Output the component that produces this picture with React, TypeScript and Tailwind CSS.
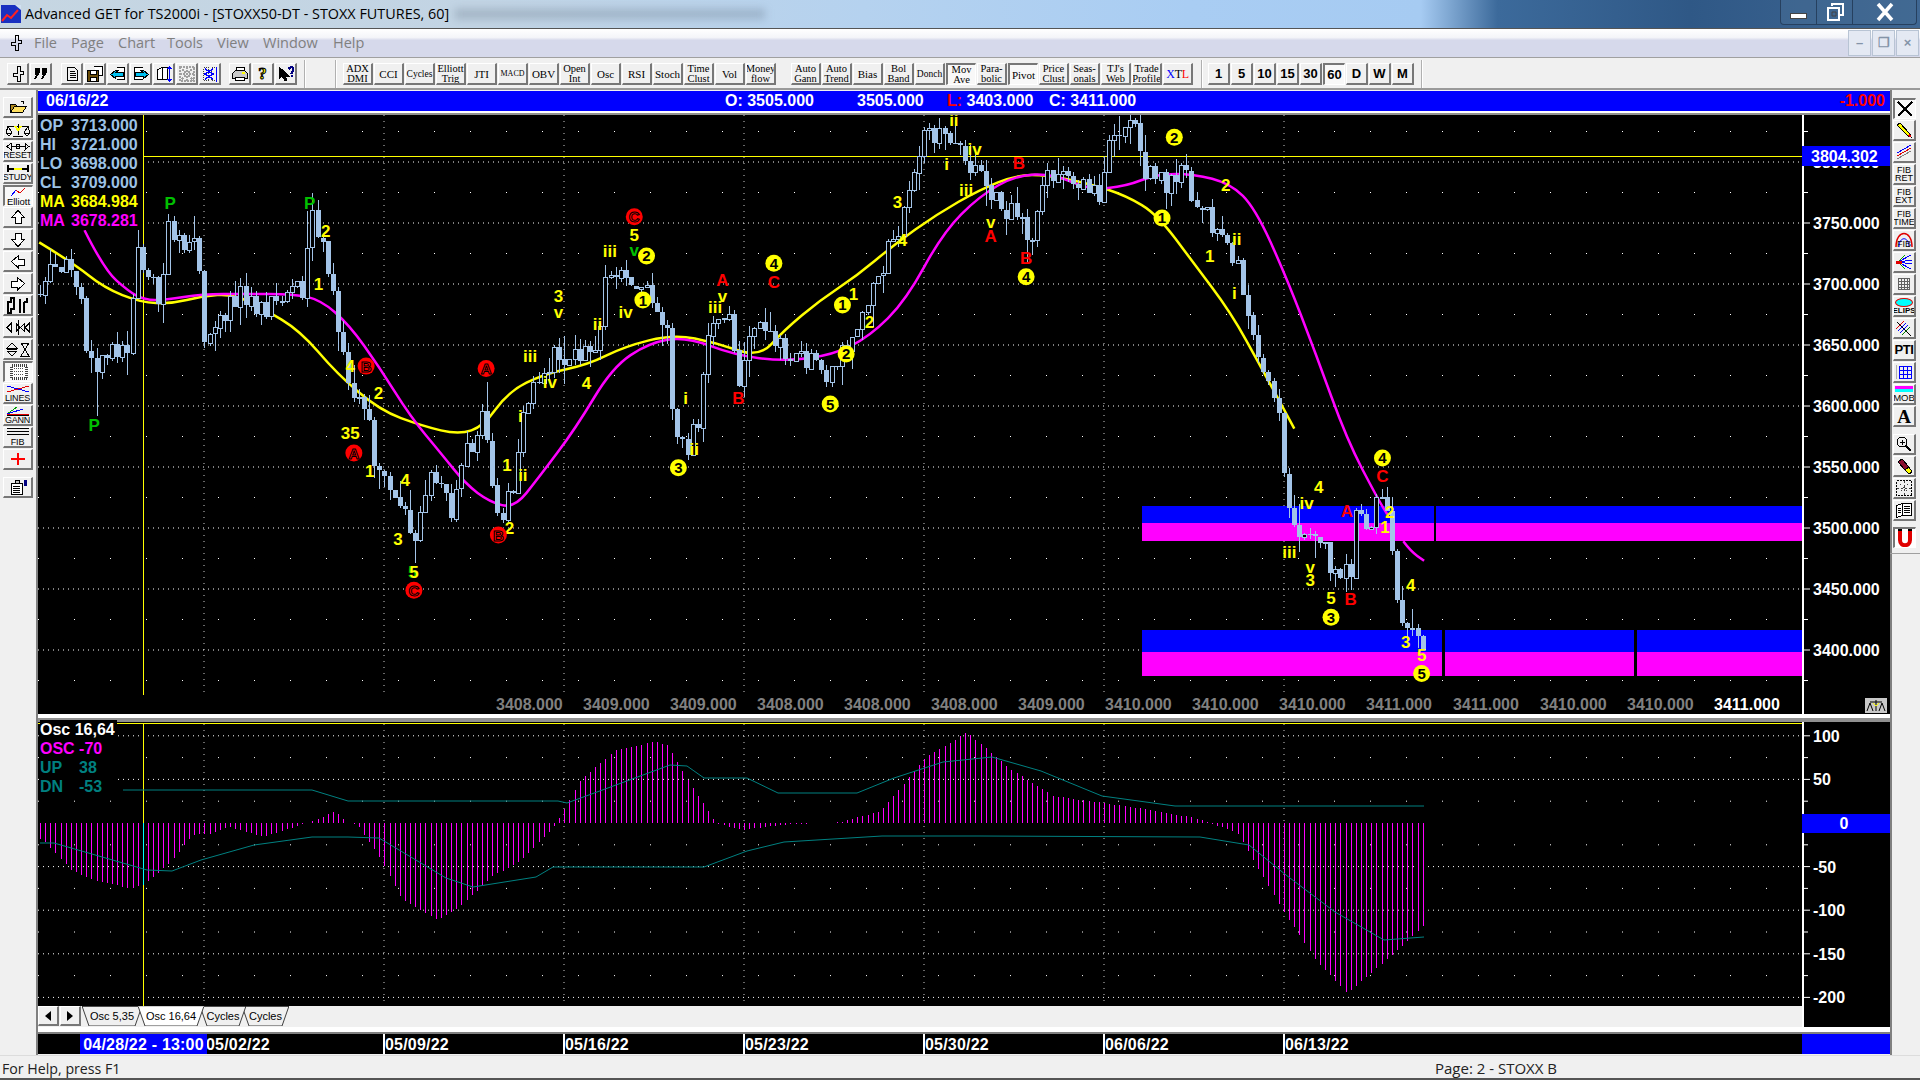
import type { ReactNode } from 'react';

const S = 1920 / 1568;
type Pt = [number, number];

// price path, read off the picture (in 1568-wide coordinates)
const pricePath: Pt[] = [
    [32, 240], [40, 222], [50, 215], [65, 240], [72, 290], [78, 315], [90, 275], [104, 290], [112, 205], [125, 230], [132, 250], [138, 182], [150, 212], [160, 182], [168, 290], [178, 260], [195, 240], [215, 250], [235, 240], [248, 235], [255, 180], [265, 210], [278, 270], [285, 310], [300, 330], [305, 370], [320, 400], [330, 425], [340, 440], [345, 400], [360, 390], [370, 420], [380, 370], [395, 340], [400, 390], [410, 420], [420, 400], [425, 340], [440, 310], [455, 290], [470, 285], [485, 295], [495, 225], [510, 222], [525, 230], [545, 270], [550, 340], [560, 365], [570, 340], [580, 260], [595, 265], [603, 315], [615, 270], [630, 270], [645, 290], [660, 290], [680, 310], [695, 270], [710, 240], [725, 205], [740, 170], [755, 105], [770, 110], [785, 130], [800, 140], [815, 165], [835, 175], [840, 200], [850, 150], [870, 145], [880, 150], [900, 165], [905, 120], [925, 100], [935, 135], [955, 150], [965, 140], [985, 175], [1000, 195], [1010, 210], [1018, 260], [1035, 310], [1045, 350], [1050, 415], [1060, 435], [1075, 430], [1085, 460], [1105, 470], [1100, 430], [1120, 420], [1130, 410], [1136, 430], [1140, 490], [1150, 510], [1160, 525],
];

// long wicks worth keeping: x, y tip
const spikes: Pt[] = [[78, 340], [338, 460], [1048, 385], [398, 312], [1130, 400], [252, 172], [137, 176], [160, 176], [780, 98], [928, 96], [1152, 497], [840, 215], [1105, 482]];

const maYellow: Pt[] = [
    [32, 198], [60, 215], [85, 235], [115, 247], [140, 248], [165, 242], [190, 240], [215, 252], [245, 270], [275, 305], [310, 335], [345, 348], [375, 355], [395, 348], [415, 320], [445, 305], [480, 298], [510, 283], [550, 273], [585, 280], [620, 292], [640, 270], [670, 245], [700, 225], [730, 200], [765, 175], [800, 155], [830, 143], [855, 143], [890, 150], [920, 160], [945, 175], [975, 215], [1005, 255], [1030, 300], [1057, 350],
];

const maMagenta: Pt[] = [
    [69, 188], [85, 220], [105, 238], [118, 245], [135, 245], [165, 240], [200, 240], [240, 240], [262, 245], [285, 265], [310, 300], [335, 340], [360, 370], [380, 395], [400, 410], [420, 415], [440, 390], [470, 350], [500, 300], [530, 280], [560, 275], [600, 290], [640, 295], [680, 290], [710, 275], [740, 245], [770, 190], [800, 160], [830, 143], [860, 142], [890, 155], [920, 152], [945, 142], [975, 142], [1005, 150], [1025, 170], [1050, 225], [1075, 290], [1100, 359], [1125, 407], [1133, 420],
];

const maMagentaEnd: Pt[] = [[1146, 442], [1152, 450], [1163, 458]];

// label: x, y, text, kind
type Kind = 'y' | 'g' | 'r' | 'cy' | 'cr';
const waves: [number, number, string, Kind][] = [
    [139, 166, 'P', 'g'], [253, 166, 'P', 'g'], [77, 347, 'P', 'g'],
    [266, 189, '2', 'y'], [260, 232, '1', 'y'], [286, 299, '4', 'y'], [309, 321, '2', 'y'], [286, 354, '35', 'y'], [302, 385, '1', 'y'], [331, 392, '4', 'y'], [325, 440, '3', 'y'], [337, 467, '5', 'g'], [338, 467, '5', 'y'],
    [414, 380, '1', 'y'], [416, 431, '2', 'y'], [425, 340, 'i', 'y'], [427, 388, 'ii', 'y'], [433, 291, 'iii', 'y'], [449, 312, 'iv', 'y'], [479, 313, '4', 'y'], [488, 265, 'ii', 'y'], [456, 242, '3', 'y'], [456, 255, 'v', 'y'], [498, 205, 'iii', 'y'], [518, 192, '5', 'y'], [518, 204, 'v', 'g'], [511, 255, 'iv', 'y'], [560, 325, 'i', 'y'], [567, 367, 'ii', 'y'], [584, 251, 'iii', 'y'], [590, 242, 'v', 'y'],
    [773, 134, 'i', 'y'], [796, 122, 'iv', 'y'], [789, 155, 'iii', 'y'], [779, 98, 'ii', 'y'], [697, 240, '1', 'y'], [710, 263, '2', 'y'], [733, 165, '3', 'y'], [737, 196, '4', 'y'], [809, 181, 'v', 'y'], [1001, 151, '2', 'y'], [988, 209, '1', 'y'], [1010, 195, 'ii', 'y'], [1008, 239, 'i', 'y'],
    [1053, 451, 'iii', 'y'], [1067, 411, 'iv', 'y'], [1077, 398, '4', 'y'], [1070, 463, 'v', 'y'], [1070, 474, '3', 'y'], [1087, 488, '5', 'y'], [1135, 418, '2', 'y'], [1131, 430, '1', 'y'], [1152, 478, '4', 'y'], [1148, 524, '3', 'y'], [1161, 535, '5', 'y'],
    [590, 229, 'A', 'r'], [632, 230, 'C', 'r'], [603, 325, 'B', 'r'], [809, 193, 'A', 'r'], [832, 133, 'B', 'r'], [838, 211, 'B', 'r'], [1129, 389, 'C', 'r'], [1100, 417, 'A', 'r'], [1103, 489, 'B', 'r'],
    [528, 209, '2', 'cy'], [525, 245, '1', 'cy'], [554, 382, '3', 'cy'], [632, 215, '4', 'cy'], [688, 249, '1', 'cy'], [691, 289, '2', 'cy'], [678, 330, '5', 'cy'], [838, 226, '4', 'cy'], [959, 112, '2', 'cy'], [949, 178, '1', 'cy'], [1087, 504, '3', 'cy'], [1129, 374, '4', 'cy'], [1161, 550, '5', 'cy'],
    [518, 177, 'C', 'cr'], [299, 299, 'B', 'cr'], [397, 301, 'A', 'cr'], [289, 370, 'A', 'cr'], [407, 437, 'B', 'cr'], [338, 482, 'C', 'cr'],
];

// real px: x, oscillator value
const oscPath: Pt[] = [
    [40, -18], [45, -22], [71, -54], [92, -65], [130, -75], [143, -71], [170, -46], [192, -14], [210, -12], [228, -4], [263, -16], [304, -1], [335, 13], [348, 0], [357, -2], [380, -40], [402, -88], [437, -111], [460, -96], [491, -62], [522, -42], [553, -5], [563, 13], [580, 49], [616, 84], [654, 93], [667, 90], [690, 45], [716, 0], [741, -8], [784, -2], [840, 1], [881, 14], [925, 75], [967, 104], [1010, 62], [1053, 31], [1139, 17], [1194, 6], [1237, -11], [1280, -95], [1316, -158], [1347, -195], [1378, -165], [1408, -135], [1424, -117],
];

const tealUp: Pt[] = [
    [123, 790], [312, 790], [348, 801], [558, 801], [567, 803], [616, 785], [670, 765], [687, 766], [704, 778], [747, 778], [778, 793], [857, 793], [894, 778], [943, 762], [992, 757], [1041, 771], [1102, 796], [1175, 806], [1424, 806],
];

const tealDn: Pt[] = [
    [40, 843], [54, 843], [147, 870], [172, 871], [201, 860], [254, 845], [312, 837], [348, 837], [379, 838], [446, 878], [473, 887], [536, 877], [553, 867], [704, 867], [747, 851], [784, 842], [882, 836], [980, 836], [1200, 837], [1249, 845], [1286, 875], [1335, 912], [1384, 940], [1424, 937],
];

const joined = (pts: Pt[]) => pts.map(([x, y]) => `${x},${y}`).join(' ');

// curve through the midpoints, so the averages don't look like a polygon
function smooth(pts: Pt[]) {
    const p = pts.map(([x, y]) => [x * S, y * S]);
    let d = `M${p[0][0].toFixed(1)} ${p[0][1].toFixed(1)}`;
    for (let i = 1; i < p.length - 1; i++) {
        const mx = (p[i][0] + p[i + 1][0]) / 2;
        const my = (p[i][1] + p[i + 1][1]) / 2;
        d += `Q${p[i][0].toFixed(1)} ${p[i][1].toFixed(1)} ${mx.toFixed(1)} ${my.toFixed(1)}`;
    }
    const l = p[p.length - 1];
    return `${d}L${l[0].toFixed(1)} ${l[1].toFixed(1)}`;
}

function lerp(pts: Pt[], x: number) {
    for (let i = 1; i < pts.length; i++) {
        if (x <= pts[i][0] && pts[i][0] > pts[i - 1][0]) {
            const t = (x - pts[i - 1][0]) / (pts[i][0] - pts[i - 1][0]);
            if (t >= 0) return pts[i - 1][1] + (pts[i][1] - pts[i - 1][1]) * t;
        }
    }
    return pts[pts.length - 1][1];
}

function rng(seed: number) {
    let a = seed;
    return () => {
        a = (a + 0x6d2b79f5) | 0;
        let t = Math.imul(a ^ (a >>> 15), 1 | a);
        t = (t + Math.imul(t ^ (t >>> 7), 61 | t)) ^ t;
        return ((t ^ (t >>> 14)) >>> 0) / 4294967296;
    };
}

const candles = (() => {
    const r = rng(42);
    const out: { x: number; o: number; c: number; h: number; l: number }[] = [];
    let prev = lerp(pricePath, 32) * S;
    for (let x = 40; x < 1424; x += 5.14) {
        const target = lerp(pricePath, x / S) * S;
        const c = target + (r() - 0.5) * 26;
        const o = prev;
        const h = Math.min(o, c) - r() * r() * 24;
        const l = Math.max(o, c) + r() * r() * 24;
        out.push({ x: Math.round(x) + 0.5, o, c, h, l });
        prev = c;
    }
    for (const [sx, sy] of spikes) {
        const rx = sx * S;
        const near = out.reduce((a, b) => (Math.abs(b.x - rx) < Math.abs(a.x - rx) ? b : a));
        if (sy * S < near.h) near.h = sy * S;
        if (sy * S > near.l) near.l = sy * S;
    }
    return out;
})();

const oscBars = (() => {
    const out: { x: number; v: number }[] = [];
    for (let x = 40; x < 1425; x += 5.14) out.push({ x: Math.round(x) + 0.5, v: lerp(oscPath, x) });
    return out;
})();

const priceY = (p: number) => 650 + (3400 - p) * 1.22;
const oscY = (v: number) => 823 - v * 0.872;
const gridX = [204, 384, 564, 744, 924, 1104, 1284];

function DotRows({ ys }: { ys: number[] }) {
    return (
        <>
            {ys.map((y) => (
                <line key={y} x1={38} x2={1802} y1={y} y2={y} stroke="#fff" strokeDasharray="1 35" />
            ))}
        </>
    );
}

function Wave({ x, y, t, k }: { x: number; y: number; t: string; k: Kind }) {
    const cx = x * S;
    const cy = y * S;
    if (k === 'cy') {
        return (
            <g>
                <circle cx={cx} cy={cy} r={8.5} fill="#ffff00" />
                <text x={cx} y={cy + 5.5} textAnchor="middle" fontSize={15} fontWeight={700} fill="#000">{t}</text>
            </g>
        );
    }
    if (k === 'cr') {
        return (
            <g>
                <circle cx={cx} cy={cy} r={8.5} fill="#ff0000" />
                <text x={cx} y={cy + 5.5} textAnchor="middle" fontSize={15} fontWeight={700} fill="#ff0000" stroke="#000" strokeWidth={1}>{t}</text>
            </g>
        );
    }
    const fill = k === 'y' ? '#ffff00' : k === 'g' ? '#00c000' : '#ff0000';
    return <text x={cx} y={cy + 6} textAnchor="middle" fontSize={17} fontWeight={700} fill={fill}>{t}</text>;
}

function MainPlot() {
    const ys = [3800, 3750, 3700, 3650, 3600, 3550, 3500, 3450, 3400].map(priceY);
    const bottom = ['3408.000', '3409.000', '3409.000', '3408.000', '3408.000', '3408.000', '3409.000', '3410.000', '3410.000', '3410.000', '3411.000', '3411.000', '3410.000', '3410.000'];
    return (
        <svg viewBox="38 115 1764 599" className="block w-[1764px] h-[599px] shrink-0 bg-black" style={{ fontFamily: '"Liberation Sans", sans-serif' }}>
            {ys.map((y) => <line key={y} x1={38} x2={1802} y1={y} y2={y} stroke="#fff" strokeDasharray="1 4" />)}
            {gridX.map((x) => <line key={x} x1={x} x2={x} y1={115} y2={695} stroke="#fff" strokeDasharray="1 5" strokeOpacity={0.8} />)}
            <DotRows ys={[3825, 3775, 3725, 3675, 3625, 3575, 3525, 3475, 3425, 3375].map(priceY)} />
            <line x1={143.5} x2={143.5} y1={115} y2={695} stroke="#ffff00" />
            <line x1={143} x2={1802} y1={156.5} y2={156.5} stroke="#ffff00" />

            {/* zones */}
            <rect x={1142} y={506} width={660} height={17} fill="#0000ff" />
            <rect x={1142} y={523} width={660} height={18} fill="#ff00ff" />
            <rect x={1434} y={506} width={2} height={35} fill="#000" />
            <rect x={1142} y={630} width={660} height={22} fill="#0000ff" />
            <rect x={1142} y={652} width={660} height={24} fill="#ff00ff" />
            <rect x={1442} y={630} width={3} height={46} fill="#000" />
            <rect x={1634} y={630} width={3} height={46} fill="#000" />

            <path d={smooth(maYellow)} fill="none" stroke="#ffff00" strokeWidth={2.5} />
            <path d={smooth(maMagenta)} fill="none" stroke="#ff00ff" strokeWidth={2.5} />
            <path d={smooth(maMagentaEnd)} fill="none" stroke="#ff00ff" strokeWidth={2.5} />

            {candles.map((c, i) => {
                const up = c.c < c.o;
                const top = Math.round(Math.min(c.o, c.c));
                const h = Math.max(Math.round(Math.abs(c.o - c.c)), 1);
                return (
                    <g key={i} shapeRendering="crispEdges">
                        <line x1={c.x} x2={c.x} y1={Math.max(c.h, 115)} y2={c.l} stroke="#a3c4e8" />
                        {up ? (
                            <rect x={c.x - 2} y={top + 0.5} width={4} height={h} fill="#000" stroke="#a3c4e8" />
                        ) : (
                            <rect x={c.x - 2.5} y={top} width={5} height={h} fill="#a3c4e8" />
                        )}
                    </g>
                );
            })}

            {waves.map(([x, y, t, k], i) => <Wave key={i} x={x} y={y} t={t} k={k} />)}

            {bottom.map((t, i) => (
                <text key={i} x={496 + i * 87} y={710} fontSize={16} fontWeight={700} fill="#808080">{t}</text>
            ))}
            <text x={1714} y={710} fontSize={16} fontWeight={700} fill="#fff">3411.000</text>
        </svg>
    );
}

function MainAxis() {
    const labels = [3750, 3700, 3650, 3600, 3550, 3500, 3450, 3400];
    const majors = [3800, ...labels];
    const minors = [3825, 3775, 3725, 3675, 3625, 3575, 3525, 3475, 3425, 3375];
    return (
        <svg viewBox="1802 115 88 599" className="block w-[88px] h-[599px] shrink-0 bg-black" style={{ fontFamily: '"Liberation Sans", sans-serif' }}>
            <line x1={1803} x2={1803} y1={115} y2={714} stroke="#fff" strokeWidth={2} />
            {majors.map((p) => <line key={p} x1={1803} x2={1810} y1={priceY(p)} y2={priceY(p)} stroke="#fff" />)}
            {minors.map((p) => <line key={p} x1={1803} x2={1808} y1={priceY(p)} y2={priceY(p)} stroke="#fff" />)}
            {[3800, ...labels].map((p) => (
                <text key={p} x={1813} y={priceY(p) + 6} fontSize={16} fontWeight={700} fill="#fff">{p}.000</text>
            ))}
            <rect x={1802} y={146} width={88} height={20} fill="#0000ff" />
            <text x={1811} y={162} fontSize={16} fontWeight={700} fill="#fff">3804.302</text>
            {/* scales mini icon */}
            <rect x={1865} y={698} width={22} height={15} fill="#c8c8c8" />
            <path d="M1867 711l3-8 3 8M1879 711l3-8 3 8M1870 702h12M1876 700v11" fill="none" stroke="#000" />
            <path d="M1873 703l3 3 3-3" fill="none" stroke="#ffff00" />
        </svg>
    );
}

function OscPlot() {
    const ys = [100, 50, -50, -100, -150, -200].map(oscY);
    return (
        <svg viewBox="38 722 1764 284" className="block w-[1764px] h-[284px] bg-black">
            {ys.map((y) => <line key={y} x1={38} x2={1802} y1={y} y2={y} stroke="#fff" strokeDasharray="1 4" />)}
            {gridX.map((x) => <line key={x} x1={x} x2={x} y1={724} y2={1006} stroke="#fff" strokeDasharray="1 5" strokeOpacity={0.8} />)}
            <DotRows ys={[75, 25, -25, -75, -125, -175].map(oscY)} />
            {oscBars.map((b, i) => (
                <line key={i} x1={b.x} x2={b.x} y1={823} y2={oscY(b.v)} stroke="#ff00ff" shapeRendering="crispEdges" />
            ))}
            <line x1={143.5} x2={143.5} y1={723} y2={1006} stroke="#ffff00" shapeRendering="crispEdges" />
            <line x1={143.5} x2={143.5} y1={823} y2={885} stroke="#00ffff" shapeRendering="crispEdges" />
            <line x1={38} x2={1802} y1={723.5} y2={723.5} stroke="#ffff00" />
            <polyline points={joined(tealUp)} fill="none" stroke="#008080" />
            <polyline points={joined(tealDn)} fill="none" stroke="#008080" />
        </svg>
    );
}

function OscAxis() {
    const labels = [100, 50, -50, -100, -150, -200];
    return (
        <svg viewBox="1802 722 88 305" className="block w-[88px] h-[305px] shrink-0 bg-black" style={{ fontFamily: '"Liberation Sans", sans-serif' }}>
            <line x1={1803} x2={1803} y1={722} y2={1027} stroke="#fff" strokeWidth={2} />
            {[...labels, 75, 25, -25, -75, -125, -175].map((v) => (
                <line key={v} x1={1803} x2={v % 50 === 0 ? 1810 : 1808} y1={oscY(v)} y2={oscY(v)} stroke="#fff" />
            ))}
            {labels.map((v) => (
                <text key={v} x={1813} y={oscY(v) + 6} fontSize={16} fontWeight={700} fill="#fff">{v}</text>
            ))}
            <rect x={1802} y={814} width={88} height={19} fill="#0000ff" />
            <text x={1844} y={829} textAnchor="middle" fontSize={16} fontWeight={700} fill="#fff">0</text>
        </svg>
    );
}

function Raised({ children, pressed, className }: { children: ReactNode; pressed?: boolean; className: string }) {
    const edge = pressed
        ? 'border-t-2 border-l-2 border-t-[#777] border-l-[#777] border-r border-b border-r-white border-b-white bg-[#f8f8f8]'
        : 'border-t border-l border-t-white border-l-white border-r-2 border-b-2 border-r-[#777] border-b-[#777] bg-[#f0f0f0]';
    return <div className={`${edge} ${className} flex items-center justify-center shrink-0 overflow-hidden`}>{children}</div>;
}

const TB = 'w-[22px] h-[22px]';
const STUDY = 'w-[30px] h-[22px]';

function Ico({ children, w = 18, h = 18 }: { children: ReactNode; w?: number; h?: number }) {
    return (
        <svg width={w} height={h} viewBox={`0 0 ${w} ${h}`} fill="none" stroke="#000" strokeWidth={1} shapeRendering="crispEdges">
            {children}
        </svg>
    );
}

const CrossGlyph = () => (
    <Ico w={12} h={18}>
        <path d="M5.5 1.5h3v5h3v3h-3v7h-3v-5h-4v-3h4z" strokeWidth={1.5} />
    </Ico>
);

function StudyBtn({ a, b, pressed }: { a: string; b?: string; pressed?: boolean }) {
    const single = a === 'MACD' ? 'text-[8px] leading-[12px]' : a === 'Cycles' || a === 'Donch' ? 'text-[9.5px] leading-[12px]' : 'text-[11px] leading-[12px]';
    return (
        <Raised pressed={pressed} className={STUDY}>
            <span className="flex flex-col items-center text-center text-black whitespace-nowrap" style={{ fontFamily: '"Liberation Serif", serif' }}>
                <span className={b ? 'text-[10.5px] leading-[9.5px]' : single}>{a}</span>
                {b && <span className="text-[10.5px] leading-[9.5px]">{b}</span>}
            </span>
        </Raised>
    );
}

const groupOne: [string, string?][] = [['ADX', 'DMI'], ['CCI'], ['Cycles'], ['Elliott', 'Trig'], ['JTI'], ['MACD'], ['OBV'], ['Open', 'Int'], ['Osc'], ['RSI'], ['Stoch'], ['Time', 'Clust'], ['Vol'], ['Money', 'flow']];
const groupTwo: [string, string?, boolean?][] = [['Auto', 'Gann'], ['Auto', 'Trend'], ['Bias'], ['Bol', 'Band'], ['Donch'], ['Mov', 'Ave', true], ['Para-', 'bolic'], ['Pivot', undefined, true], ['Price', 'Clust'], ['Seas-', 'onals'], ["TJ's", 'Web'], ['Trade', 'Profile']];

const Sep = ({ className }: { className: string }) => <div className={`w-[2px] h-[28px] border-l border-[#b0b0b0] bg-white shrink-0 ${className}`} />;

function TopToolbar() {
    return (
        <div className="h-[32px] shrink-0 flex items-center pl-[7px] pt-[2px] bg-[#f0f0f0] border-b-2 border-[#9a9a9a]">
            <div className="flex gap-px">
                <Raised className={TB}><CrossGlyph /></Raised>
                <Raised className={TB}>
                    <Ico w={14} h={14}><path d="M1 1h4v5l-3 5H1l2-4H1zM8 1h4v5l-3 5H8l2-4H8z" fill="#000" /></Ico>
                </Raised>
            </div>
            <div className="flex gap-px ml-[9px]">
                <Raised className={TB}><Ico w={14} h={16}><path d="M2.5 1.5h7l3 3v10h-10zM4.5 5.5h5M4.5 7.5h6M4.5 9.5h6M4.5 11.5h6" /></Ico></Raised>
                <Raised className={TB}><Ico><path d="M7.5 1.500h9v9h-4" fill="#fff" /><path d="M1.5 5.5h11v11h-11z" fill="#6a4c08" /><path d="M4.5 5.5h6v4h-6zM4.5 12.5h6v4h-6z" fill="#fff" /></Ico></Raised>
                <Raised className={TB}><Ico><path d="M7.5 2.5h8v12h-8" fill="#fff" /><path d="M9.5 5.5h-3l-5 4 5 4v-2h8v-4h-8z" fill="#00c0f0" /></Ico></Raised>
                <Raised className={TB}><Ico><path d="M10.5 2.5h-8v12h8" fill="#fff" /><path d="M8.5 5.5h3l5 4-5 4v-2h-8v-4h8z" fill="#00c0f0" /></Ico></Raised>
                <Raised className={TB}><Ico><path d="M2.5 4.500l5-2v12h-5zM7.500 2.500h5v12h-5z" fill="#fff" /><path d="M14.500 1.500v15M12.500 4l2-2 2 2M12.500 14l2 2 2-2" stroke="#0000ff" /></Ico></Raised>
                <Raised className={TB}><Ico><path d="M2 2l14 14M16 2L2 16M2 9h14M9 2v14M2 2h14v14H2z" stroke="#a0a0a0" strokeWidth={2} strokeDasharray="2 1" /></Ico></Raised>
                <Raised className={TB}><Ico><path d="M2.500 2.500h5v13h-5zM10.500 2.500h5v13h-5z" stroke="#404040" strokeDasharray="1 1" /><path d="M4 4l8 5-8 5M12 4L4 9l8 5" stroke="#0000ff" strokeWidth={1.5} /><path d="M15.500 1.500v15" stroke="#0000ff" /></Ico></Raised>
            </div>
            <div className="flex gap-px ml-[8px]">
                <Raised className={TB}><Ico><path d="M5.5 2.5h8v4h-8z" fill="#fff" /><path d="M1.5 8.5l3-3h9l3 3v5h-15z" fill="#c8c8c8" /><path d="M4.5 12.5h9v3h-9z" fill="#fff" /><path d="M11 8h3" stroke="#ffff00" strokeWidth={2} /></Ico></Raised>
                <Raised className={TB}><span className="text-[17px] font-bold text-[#ffff00] leading-none" style={{ fontFamily: '"Liberation Serif", serif', WebkitTextStroke: '1px #000' }}>?</span></Raised>
                <Raised className={TB}><Ico><path d="M2 2v12l3-3 3 5 2-1-2-4h4z" fill="#000" /><path d="M11.5 4.5c1-3 5-3 5 0 0 2-2 2-2 4M14.5 10v2" stroke="#000080" strokeWidth={2} /></Ico></Raised>
            </div>
            <Sep className="ml-[7px]" />
            <Sep className="ml-[29px]" />
            <div className="flex gap-px ml-[6px]">
                {groupOne.map(([a, b]) => <StudyBtn key={a} a={a} b={b} />)}
            </div>
            <div className="flex gap-px ml-[15px]">
                {groupTwo.map(([a, b, p]) => <StudyBtn key={a + (b ?? '')} a={a} b={b} pressed={p} />)}
                <Raised className={STUDY}>
                    <span className="text-[12px] tracking-tight" style={{ fontFamily: '"Liberation Serif", serif' }}>
                        <span className="text-[#0000ff]">X</span>T<span className="text-[#ff0000]">L</span>
                    </span>
                </Raised>
            </div>
            <Sep className="ml-[8px]" />
            <div className="flex gap-px ml-[5px]">
                {['1', '5', '10', '15', '30', '60', 'D', 'W', 'M'].map((t) => (
                    <Raised key={t} pressed={t === '60'} className={TB}>
                        <span className="text-[13px] font-bold text-black" style={{ fontFamily: '"Liberation Sans", sans-serif' }}>{t}</span>
                    </Raised>
                ))}
            </div>
            <Sep className="ml-[7px]" />
        </div>
    );
}

const cap = 'text-[9px] leading-[9px] text-black tracking-tight';
const capFont = { fontFamily: '"Liberation Sans", sans-serif' };
const LB = 'w-[30px] h-[21px]';

function Arrow({ d }: { d: string }) {
    return <Ico w={16} h={17}><path d={d} fill="#fff" /></Ico>;
}

function LeftToolbar() {
    const items: ReactNode[] = [
        <Ico key="o" w={20} h={16}><path d="M2.5 5.5h5l2 2h5v6h-12z" fill="#b08a20" /><path d="M2.5 13.5l4-6h12l-4 6z" fill="#ffe060" /><path d="M13 2c2 0 3 1 3 3" stroke="#000" /></Ico>,
        <Ico key="s" w={26} h={17}><path d="M3 5h20M13 3v11M8 15h10M3 5l-2 7M3 5l4 7M23 5l-4 7M23 5l2 7" /><path d="M1 12h6l-3 3zM19 12h6l-3 3z" fill="#fff" /><path d="M10 5l3 4 3-4" stroke="#ffff00" strokeWidth={2} /></Ico>,
        <div key="r" className="flex flex-col items-center" style={capFont}><Ico w={24} h={9}><path d="M1 4.5l4-3v6zM23 4.5l-4-3v6zM5 4.5h14" /><circle cx={12} cy={4.5} r={2} /></Ico><span className={cap}>RESET</span></div>,
        <div key="st" className="flex flex-col items-center" style={capFont}><Ico w={24} h={9}><path d="M2 1v7M22 1v7M2 4.5h20" strokeWidth={2} /><path d="M8 4.5h8" stroke="#ffff00" strokeWidth={2} /></Ico><span className={cap}>STUDY</span></div>,
        <div key="e" className="flex flex-col items-center" style={capFont}><Ico w={24} h={10}><path d="M4 9l5-6 4 3 5-5" stroke="#e00000" /><path d="M4 9l5-6" stroke="#0000ff" /></Ico><span className="text-[9.5px] leading-[9px] text-black">Elliott</span></div>,
        <Arrow key="u" d="M8 1.5l6.5 7h-3.5v6h-6v-6h-3.5z" />,
        <Arrow key="d" d="M8 15.5l6.5-7h-3.5v-6h-6v6h-3.5z" />,
        <Arrow key="l" d="M1.5 8.5l7-6v3.5h6v6h-6v3z" />,
        <Arrow key="ri" d="M14.5 8.5l-7-6v3.5h-6v6h6v3z" />,
        <Ico key="b1" w={26} h={17}><path d="M3 9V5h3V1h3v11H6v4H3V9zM15 2v14M19 9V5M19 5h3v-4M19 9v7" strokeWidth={1.5} /></Ico>,
        <Ico key="b2" w={26} h={17}><path d="M2 8.5l4-4v8zM11 4.5l4 4-4 4zM13 1v15M15.5 8.5l4-4v8zM24 4.5v8l-4-4z" /></Ico>,
        <Ico key="b3" w={26} h={17}><path d="M2 7l5-5 5 5zM2 10l5 5 5-5zM2 8.5h10M16 2h8l-4 6.5zM16 15h8l-4-6.5z" /></Ico>,
    ];
    const lower: ReactNode[] = [
        <Ico key="g" w={18} h={16}><path d="M1.5 1.5h15v13h-15z" fill="#fff" strokeDasharray="1 1" strokeWidth={3} stroke="#404040" /><path d="M4 4.5h10M4 7.5h10M4 10.5h10" stroke="#505050" strokeDasharray="1 1" /></Ico>,
        <div key="li" className="flex flex-col items-center" style={capFont}><Ico w={26} h={10}><path d="M2 2l22 6" stroke="#0000ff" /><path d="M2 8l22-6" stroke="#e00000" /></Ico><span className={cap}>LINES</span></div>,
        <div key="ga" className="flex flex-col items-center" style={capFont}><Ico w={26} h={10}><path d="M2 8l10-7" stroke="#00a000" /><path d="M2 8l16-5" stroke="#0000ff" /><path d="M2 8h22" stroke="#e00000" /><path d="M2 9.5h22" /></Ico><span className={cap}>GANN</span></div>,
        <div key="fi" className="flex flex-col items-center gap-[2px]" style={capFont}><Ico w={26} h={9}><path d="M2 1.5h22M2 4.5h22M2 7.5h22" /></Ico><span className={cap}>FIB</span></div>,
        <Ico key="p" w={16} h={16}><path d="M8 2v12M1 8h14" stroke="#ff0000" strokeWidth={2} /></Ico>,
    ];
    return (
        <div className="w-[36px] shrink-0 pl-[3px] pt-[7px] flex flex-col gap-px">
            {items.map((n, i) => <Raised key={i} pressed={i === 4} className={LB}>{n}</Raised>)}
            {lower.map((n, i) => <Raised key={i} pressed={i === 0} className={LB}>{n}</Raised>)}
            <Raised className={`${LB} mt-[6px]`}>
                <Ico w={22} h={18}><path d="M4.5 5.5h11v11h-11z" fill="#fff" /><path d="M6 8h7M6 10h7M6 12h7M6 14h7" /><path d="M8 2.5h4v3h-4z" fill="#c0c0c0" /><path d="M18 2v6" stroke="#000080" strokeWidth={3} /></Ico>
            </Raised>
        </div>
    );
}

const RB = 'w-[23px] h-[21px]';
const tiny = 'text-[9px] leading-[8.5px] text-black text-center';

function RightToolbar() {
    const items: ReactNode[] = [
        <Ico key="x"><path d="M2 2l14 14M16 2L2 16" strokeWidth={1.5} /></Ico>,
        <Ico key="pen"><path d="M2 4l3-2 10 11 1 3-3-1z" fill="#ffff00" /><path d="M14 14l2 2" stroke="#e00000" strokeWidth={2} /></Ico>,
        <Ico key="par"><path d="M2 10L16 2" stroke="#0000ff" /><path d="M2 13L16 5" stroke="#e00000" /><path d="M2 16L16 8" stroke="#808080" /></Ico>,
        <span key="fr" className={tiny} style={capFont}>FIB<br />RET</span>,
        <span key="fe" className={tiny} style={capFont}>FIB<br />EXT</span>,
        <span key="ft" className={tiny} style={capFont}>FIB<br />TIME</span>,
        <div key="fa" className="relative flex items-end justify-center w-[20px] h-[18px]" style={capFont}>
            <svg width={20} height={18} viewBox="0 0 20 18" fill="none" className="absolute inset-0"><path d="M2 16c0-18 16-18 16 0" stroke="#e00000" strokeWidth={1.5} /><path d="M5 16c0-11 10-11 10 0" stroke="#0000ff" /></svg>
            <span className="relative text-[9px] leading-[9px] text-black">FIB</span>
        </div>,
        <Ico key="fan"><path d="M3 9l13-7" stroke="#0000ff" /><path d="M3 9l14-2" stroke="#0000ff" /><path d="M3 9l14 2" stroke="#0000ff" /><path d="M3 9l13 7" stroke="#0000ff" /><path d="M3 9l7-7M3 9l7 7" stroke="#00a000" /><path d="M1 9h6" stroke="#e00000" strokeWidth={3} /></Ico>,
        <Ico key="gr"><path d="M3.5 3.5h11v11h-11zM3 6.5h12M3 9.5h12M3 12.5h12M6.5 3v12M9.5 3v12M12.5 3v12" stroke="#606060" /></Ico>,
        <div key="el" className="flex flex-col items-center" style={capFont}>
            <span className="block w-[18px] h-[9px] rounded-[50%] bg-[#00ffff] border border-[#e00000]" />
            <span className="text-[8px] leading-[8px] font-bold text-black">ELIPS</span>
        </div>,
        <Ico key="li"><path d="M2 3l14 14" /><path d="M3 12l8-8M5 14l8-8" stroke="#0000ff" /><path d="M1 10l8-8" stroke="#e00000" /><path d="M7 16l8-8" stroke="#008000" /></Ico>,
        <span key="pti" className="text-[13px] font-bold text-black tracking-tight" style={capFont}>PTI</span>,
        <Ico key="tb"><path d="M4.5 3.5h12v12h-12zM4 7.5h12M4 11.5h12M8.500 3v12M12.500 3v12" stroke="#0000ff" /><path d="M1.5 2v14" stroke="#b0b0b0" /></Ico>,
        <div key="mo" className="flex flex-col items-center w-[19px]" style={capFont}>
            <span className="block w-[18px] h-[3px] bg-[#ff00ff]" />
            <span className="block w-[18px] h-[3px] bg-[#00ffff] mb-px" />
            <span className="text-[9.5px] leading-[9px] text-black">MOB</span>
        </div>,
        <span key="a" className="text-[19px] font-bold text-black leading-none" style={{ fontFamily: '"Liberation Serif", serif' }}>A</span>,
    ];
    const lower: ReactNode[] = [
        <Ico key="z"><circle cx={7} cy={7} r={5} /><path d="M4.5 7h5M7 4.5v5" /><path d="M11 11l5 5" strokeWidth={2.5} /></Ico>,
        <Ico key="er"><path d="M3 5l4-3 7 8-4 3z" fill="#8a1030" /><path d="M10 13l4-3 3 5-3 2z" fill="#ffff00" /></Ico>,
        <Ico key="pa"><path d="M1.5 1.5h15v15h-15z" strokeDasharray="2 1" /><path d="M5 5l8 8M13 5l-8 8M9 2v14M2 9h14" stroke="#404040" strokeDasharray="2 2" /></Ico>,
        <Ico key="pg"><path d="M1.5 4.5l6-2v12l-6 2zM7.5 2.5h9v12h-9z" fill="#fff" /><path d="M9 5h6M9 7h6M9 9h6M9 11h6M3 7h3M3 9h3M3 11h3" /></Ico>,
    ];
    return (
        <div className="w-[30px] shrink-0 pl-[3px] pt-[8px] flex flex-col gap-px">
            {items.map((n, i) => <Raised key={i} pressed={i === 0} className={RB}>{n}</Raised>)}
            <div className="flex flex-col gap-px mt-[6px]">
                {lower.map((n, i) => <Raised key={i} className={RB}>{n}</Raised>)}
            </div>
            <Raised pressed className={`${RB} mt-[5px] bg-white`}>
                <svg width={16} height={19} viewBox="0 0 16 19" fill="none"><path d="M3 1v10c0 7 10 7 10 0V1" stroke="#e00000" strokeWidth={4} /><path d="M1 1h4M11 1h4" stroke="#000" strokeWidth={2} /></svg>
            </Raised>
            <div className="h-px bg-[#a0a0a0] mt-[4px] -ml-[3px] w-[30px]" />
        </div>
    );
}

function Tab({ label, width, active, z }: { label: string; width: number; active?: boolean; z: string }) {
    return (
        <div className={`relative -mr-[4px] h-[20px] flex items-center justify-center ${z}`} style={{ width }}>
            <svg viewBox={`0 0 ${width} 20`} className="absolute inset-0 w-full h-full">
                <polygon points={`0,0 ${width},0 ${width - 7},20 7,20`} fill={active ? '#fff' : '#f0f0f0'} stroke="#404040" />
                <line x1={0} x2={width} y1={0} y2={0} stroke={active ? '#fff' : '#000'} />
            </svg>
            <span className="relative text-[11px] text-black" style={capFont}>{label}</span>
        </div>
    );
}

function TabStrip() {
    return (
        <div className="h-[21px] flex bg-[#f0f0f0]">
            <Raised className="w-[21px] h-[20px]">
                <svg width={6} height={10} viewBox="0 0 6 10"><polygon points="6,0 0,5 6,10" fill="#000" /></svg>
            </Raised>
            <Raised className="w-[21px] h-[20px] ml-px">
                <svg width={6} height={10} viewBox="0 0 6 10"><polygon points="0,0 6,5 0,10" fill="#000" /></svg>
            </Raised>
            <div className="flex ml-px">
                <Tab label="Osc 5,35" width={60} z="z-0" />
                <Tab label="Osc 16,64" width={66} active z="z-20" />
                <Tab label="Cycles" width={46} z="z-10" />
                <Tab label="Cycles" width={47} z="z-0" />
            </div>
        </div>
    );
}

function DateBar() {
    const dates: [string, number][] = [['05/02/22', 168], ['05/09/22', 347], ['05/16/22', 527], ['05/23/22', 707], ['05/30/22', 887], ['06/06/22', 1067], ['06/13/22', 1247]];
    return (
        <div className="relative h-[22px] border-t-2 border-[#808080] bg-black flex text-white text-[16px] font-bold leading-[21px] tracking-[0.2px]" style={capFont}>
            <div className="relative w-[1764px] overflow-hidden">
                {dates.map(([d, x]) => (
                    <div key={d} className="absolute top-0 h-[20px] border-l-2 border-white" style={{ left: x - 2 }}>{d}</div>
                ))}
                <div className="absolute left-[42px] top-0 w-[127px] h-[20px] bg-[#0000ff] text-center whitespace-nowrap">04/28/22 - 13:00</div>
            </div>
            <div className="w-[88px] bg-[#0000ff]" />
        </div>
    );
}

const legendRow = 'flex';
const legendKey = 'w-[31px]';

export default function App() {
    const sans = '"Liberation Sans", sans-serif';
    const ui = '"Open Sans", "Noto Sans", sans-serif';
    return (
        <div className="w-[1920px] h-[1080px] overflow-hidden flex flex-col bg-[#f0f0f0]" style={{ fontFamily: sans }}>
            {/* title bar */}
            <div className="relative h-[28px] shrink-0 flex items-center bg-[linear-gradient(90deg,#c6d6e2_0%,#c2d4e4_25%,#b5d2ef_45%,#a9cdf3_62%,#a6cbf2_74%,#3c6a9b_78%,#2f5886_88%,#3f6793_100%)]">
                <svg width={20} height={18} viewBox="0 0 20 18" className="ml-[1px]">
                    <rect width={20} height={18} fill="#1830c0" />
                    <path d="M1 16l5-6 4 3 7-8" stroke="#ff2020" strokeWidth={2} fill="none" />
                    <path d="M14 0l6 0 0 5z" fill="#d0e0f0" />
                </svg>
                <span className="ml-[4px] text-[14.4px] text-black whitespace-nowrap" style={{ fontFamily: ui }}>Advanced GET for TS2000i - [STOXX50-DT - STOXX FUTURES, 60]</span>
                <div className="absolute left-[455px] top-[9px] w-[310px] h-[10px] bg-[#5a6a7a]/30 blur-[4px]" />
                <div className="absolute right-[3px] top-0 w-[137px] h-[25px] flex rounded-b-[4px] border border-t-0 border-[#26405f] bg-[#456a92]/60">
                    <div className="w-[36px] flex items-end justify-center pb-[5px] border-r border-[#26405f]"><span className="block w-[17px] h-[6px] bg-white border border-[#444]" /></div>
                    <div className="w-[36px] flex items-center justify-center border-r border-[#26405f]">
                        <svg width={20} height={20} viewBox="0 0 20 20" fill="none" stroke="#fff" strokeWidth={2}><path d="M7 4V2h11v11h-3" /><path d="M3 6h11v12H3z" /><path d="M7 10h4v4H7z" stroke="#444" strokeWidth={1} /></svg>
                    </div>
                    <div className="flex-1 flex items-center justify-center">
                        <svg width={20} height={20} viewBox="0 0 20 20" stroke="#fff" strokeWidth={3.5}><path d="M3 2l14 16M17 2L3 18" /></svg>
                    </div>
                </div>
            </div>

            {/* menu bar */}
            <div className="relative h-[30px] shrink-0 flex items-center bg-[linear-gradient(180deg,#ffffff_0%,#f4f5f9_30%,#d6d9eb_40%,#d6d9eb_100%)] border-t border-[#555] border-b border-b-[#a0a0a0]">
                <div className="w-[34px] pl-[10px]"><CrossGlyph /></div>
                <div className="flex text-[14.5px] text-[#808080]" style={{ fontFamily: ui }}>
                    <span className="w-[37px]">File</span>
                    <span className="w-[47px]">Page</span>
                    <span className="w-[49px]">Chart</span>
                    <span className="w-[50px]">Tools</span>
                    <span className="w-[46px]">View</span>
                    <span className="w-[70px]">Window</span>
                    <span>Help</span>
                </div>
                <div className="ml-auto mr-px flex gap-px text-[#8494a8]">
                    {['–', '❐', '×'].map((g) => (
                        <div key={g} className="w-[23px] h-[26px] flex items-center justify-center bg-[#e4e9f3] border border-[#b8c4d4] text-[13px] font-bold">{g}</div>
                    ))}
                </div>
            </div>

            <TopToolbar />

            <div className="flex flex-1 min-h-0">
                <LeftToolbar />
                <div className="w-[1856px] shrink-0 border-l-2 border-r-2 border-[#808080] -mr-[2px]">
                    {/* quote header */}
                    <div className="h-[20px] bg-[#0000ff] flex items-center text-white text-[16px] font-bold mt-px whitespace-nowrap">
                        <span className="w-[687px] pl-[8px]">06/16/22</span>
                        <span className="w-[132px]">O: 3505.000</span>
                        <span className="w-[90px]">3505.000</span>
                        <span className="w-[102px]"><span className="text-[#ff0000]">L:</span> 3403.000</span>
                        <span>C: 3411.000</span>
                        <span className="ml-auto mr-[5px] text-[#ff0000]">-1.000</span>
                    </div>
                    <div className="h-[4px] border-b-2 border-[#909090] bg-white" />
                    <div className="relative flex">
                        <MainPlot />
                        <MainAxis />
                        <div className="absolute left-[2px] top-px bg-black text-[16px] font-bold leading-[19px] whitespace-nowrap pr-[4px]">
                            <div className={`${legendRow} text-[#9cc2e5]`}><span className={legendKey}>OP</span>3713.000</div>
                            <div className={`${legendRow} text-[#9cc2e5]`}><span className={legendKey}>HI</span>3721.000</div>
                            <div className={`${legendRow} text-[#9cc2e5]`}><span className={legendKey}>LO</span>3698.000</div>
                            <div className={`${legendRow} text-[#9cc2e5]`}><span className={legendKey}>CL</span>3709.000</div>
                            <div className={`${legendRow} text-[#ffff00]`}><span className={legendKey}>MA</span>3684.984</div>
                            <div className={`${legendRow} text-[#ff00ff]`}><span className={legendKey}>MA</span>3678.281</div>
                        </div>
                    </div>
                    <div className="h-[8px] bg-white border-b-4 border-[#909090]" />
                    <div className="flex">
                        <div className="shrink-0">
                            <div className="relative">
                                <OscPlot />
                                <div className="absolute left-[2px] -top-[2px] bg-black text-[16px] font-bold leading-[19px] whitespace-nowrap pr-[2px]">
                                    <div className="text-white">Osc 16,64</div>
                                    <div className="text-[#ff00ff]">OSC -70</div>
                                    <div className="flex text-[#008080]"><span className="w-[39px]">UP</span>38</div>
                                    <div className="flex text-[#008080]"><span className="w-[39px]">DN</span>-53</div>
                                </div>
                            </div>
                            <TabStrip />
                        </div>
                        <OscAxis />
                    </div>
                    <div className="h-[5px] bg-white" />
                    <DateBar />
                </div>
                <RightToolbar />
            </div>

            {/* status bar */}
            <div className="h-[25px] shrink-0 flex items-center pt-[3px] bg-[#f0f0f0] border-t border-[#dcdcdc] border-b-2 border-b-[#555] text-[#222]" style={{ fontFamily: ui }}>
                <span className="w-[1435px] pl-[2px] text-[14.2px]">For Help, press F1</span>
                <span className="text-[15px]">Page: 2 - STOXX B</span>
            </div>
        </div>
    );
}
